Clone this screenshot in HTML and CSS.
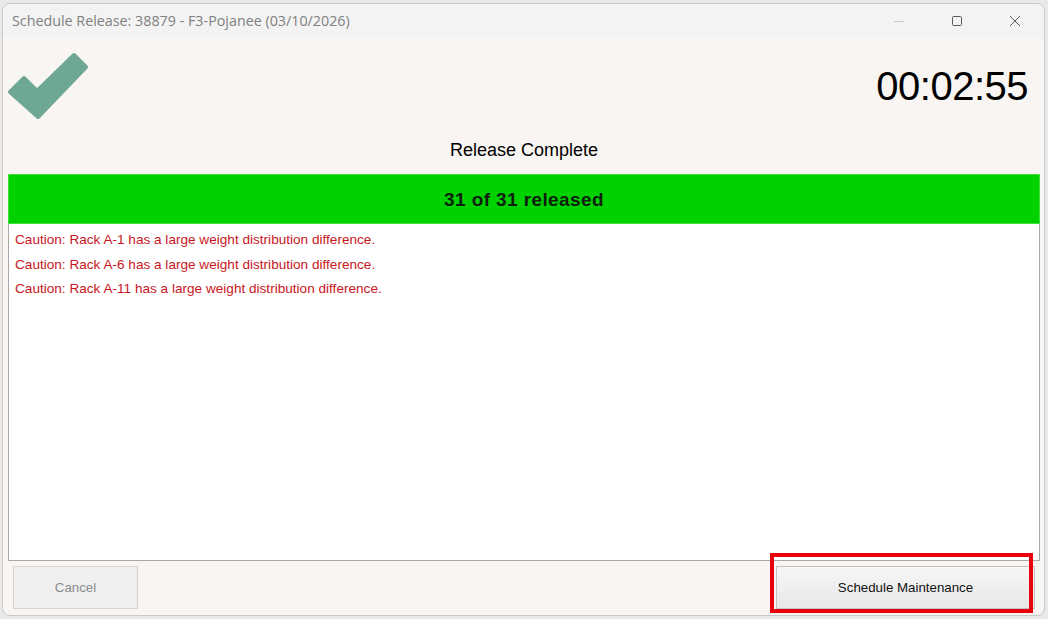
FILE: index.html
```html
<!DOCTYPE html>
<html lang="en">
<head>
    <meta charset="UTF-8">
    <meta name="viewport" content="width=device-width, initial-scale=1">
    <title>Schedule Release</title>
    <link rel="stylesheet" href="styles.css">
</head>
<body>
    <div class="window">
        <div class="titlebar">
            <span class="title">Schedule Release: 38879 - F3-Pojanee (03/10/2026)</span>
            <div class="controls">
                <span class="ctl">
                    <svg width="12" height="12" viewBox="0 0 12 12"><path d="M1 6.5h10" stroke="#c9c9c9" stroke-width="1"/></svg>
                </span>
                <span class="ctl">
                    <svg width="12" height="12" viewBox="0 0 12 12"><rect x="1.5" y="1.5" width="9" height="9" rx="1" fill="none" stroke="#5a5a5a" stroke-width="1"/></svg>
                </span>
                <span class="ctl">
                    <svg width="12" height="12" viewBox="0 0 12 12"><path d="M1 1l10 10M11 1L1 11" stroke="#5a5a5a" stroke-width="1"/></svg>
                </span>
            </div>
        </div>

        <div class="content">
            <div class="top">
                <svg class="check" width="82" height="68" viewBox="0 0 82 68">
                    <polygon points="3,40 31,65 79,15 67,3 30,39 17,26" fill="#6ea793" stroke="#6ea793" stroke-width="4" stroke-linejoin="round"/>
                </svg>
                <div class="timer">00:02:55</div>
            </div>

            <div class="status">Release Complete</div>
            <div class="progress">31 of 31 released</div>

            <ul class="log">
                <li>Caution: Rack A-1 has a large weight distribution difference.</li>
                <li>Caution: Rack A-6 has a large weight distribution difference.</li>
                <li>Caution: Rack A-11 has a large weight distribution difference.</li>
            </ul>

            <div class="footer">
                <button class="btn" disabled>Cancel</button>
                <button class="btn wide">Schedule Maintenance</button>
                <span class="mark"></span>
            </div>
        </div>
    </div>
</body>
</html>
```

FILE: styles.css
```css
html, body { margin: 0; height: 100%; }
body { background: #e9e9e9; font-family: "Liberation Sans", Arial, sans-serif; overflow: hidden; }

.window { box-sizing: border-box; width: 1043px; height: 613px; margin: 3px 0 0 2px; border: 1px solid #c9c9c9; border-radius: 8px; background: #f8f5f2; overflow: hidden; display: flex; flex-direction: column; }

.titlebar { height: 33px; flex: none; display: flex; align-items: center; justify-content: space-between; background: #f3f3f3; }
.title { padding-left: 9px; font-family: "Open Sans", "Noto Sans", sans-serif; font-size: 14.3px; color: #808080; }
.controls { display: flex; height: 100%; }
.ctl { width: 58px; display: flex; align-items: center; justify-content: center; }

.content { flex: 1; display: flex; flex-direction: column; padding: 0 4px 0 5px; }

.top { height: 100px; display: flex; justify-content: space-between; align-items: flex-start; }
.check { margin: 15px 0 0 -1px; }
.timer { margin: 26px 12px 0 0; font-size: 40px; letter-spacing: -0.5px; line-height: 46px; color: #000; }

.status { text-align: center; font-size: 18px; line-height: 24px; padding-top: 1px; height: 36px; color: #000; }

.progress { height: 50px; box-sizing: border-box; border: 1px solid #3ee03e; background: #00d200; text-align: center; padding-top: 2px; line-height: 46px; font-size: 19px; font-weight: bold; letter-spacing: 0.4px; color: #0e200e; }

.log { flex: 1; margin: 0; padding: 4px 6px; list-style: none; background: #fff; border: 1px solid #a8a8a8; border-top: none; }
.log li { font-size: 13.6px; line-height: 24.5px; color: #c8161e; }

.footer { position: relative; box-sizing: border-box; height: 54px; flex: none; display: flex; justify-content: space-between; align-items: flex-start; padding: 5px 5px 0 5px; }
.btn { height: 43px; width: 125px; box-sizing: border-box; font-family: "Liberation Sans", Arial, sans-serif; font-size: 13.3px; color: #111; background: linear-gradient(#f6f6f6, #e8e8e8); border: 1px solid #c2c2c2; border-radius: 0; }
.btn[disabled] { background: #efefef; border-color: #d4d4d4; color: #8c8c8c; }
.btn.wide { width: 259px; }

/* red highlight drawn around the maintenance button */
.mark { position: absolute; left: 762px; top: -8px; width: 263px; height: 60px; box-sizing: border-box; border: 4px solid #e8000b; pointer-events: none; }
```
